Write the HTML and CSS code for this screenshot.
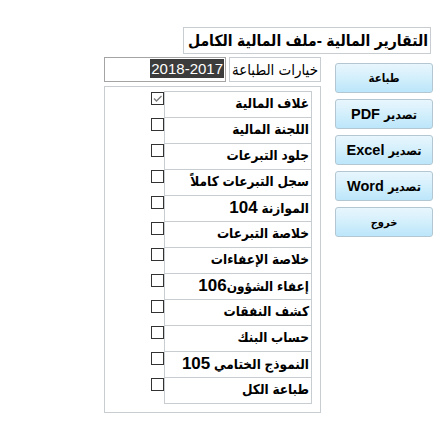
FILE: index.html
```html
<!DOCTYPE html>
<html lang="ar" dir="rtl">

<head>
    <meta charset="UTF-8">
    <title>التقارير المالية</title>
    <link rel="stylesheet" href="styles.css">
</head>

<body>
    <div id="win">
        <div id="title">التقارير المالية -ملف المالية الكامل</div>
        <div id="main">
            <div id="btns">
                <button class="btn print">طباعة</button>
                <button class="btn"><span class="ar">تصدير</span> PDF</button>
                <button class="btn"><span class="ar">تصدير</span> Excel</button>
                <button class="btn"><span class="ar">تصدير</span> Word</button>
                <button class="btn quit">خروج</button>
            </div>
            <div id="opts">
                <div id="opts_top">
                    <div id="opts_cap">خيارات الطباعة</div>
                    <div id="year"><span>2018-2017</span></div>
                </div>
                <div id="list">
                    <div class="row"><span class="lbl">غلاف المالية</span><span class="chk"><svg width="11" height="11" viewBox="0 0 11 11"><path d="M2 5.5 L4.5 8 L9.5 3" fill="none" stroke="#7a7a7a" stroke-width="1.3"/></svg></span></div>
                    <div class="row"><span class="lbl">اللجنة المالية</span><span class="chk"></span></div>
                    <div class="row"><span class="lbl">جلود التبرعات</span><span class="chk"></span></div>
                    <div class="row"><span class="lbl">سجل التبرعات كاملاً</span><span class="chk"></span></div>
                    <div class="row"><span class="lbl">الموازنة <b class="num">104</b></span><span class="chk"></span></div>
                    <div class="row"><span class="lbl">خلاصة التبرعات</span><span class="chk"></span></div>
                    <div class="row"><span class="lbl">خلاصة الإعفاءات</span><span class="chk"></span></div>
                    <div class="row"><span class="lbl">إعفاء الشؤون<b class="num">106</b></span><span class="chk"></span></div>
                    <div class="row"><span class="lbl">كشف النفقات</span><span class="chk"></span></div>
                    <div class="row"><span class="lbl">حساب البنك</span><span class="chk"></span></div>
                    <div class="row"><span class="lbl">النموذج الختامي <b class="num">105</b></span><span class="chk"></span></div>
                    <div class="row"><span class="lbl">طباعة الكل</span><span class="chk"></span></div>
                </div>
            </div>
        </div>
    </div>
</body>

</html>
```

FILE: styles.css
```css
* {
    margin: 0;
    padding: 0;
    box-sizing: border-box;
}

body {
    background: #fff;
    color: #000;
    font-family: "Liberation Sans", "DejaVu Sans Condensed", "DejaVu Sans", sans-serif;
}

#win {
    padding: 27px 5px 0 0;
}

#title {
    width: 248px;
    height: 27px;
    margin-right: 2px;
    border: 1px solid #c8cdd1;
    padding-right: 2px;
    font-size: 15.6px;
    font-weight: 700;
    line-height: 25px;
    white-space: nowrap;
    overflow: hidden;
}

#main {
    display: flex;
    align-items: flex-start;
    gap: 14px;
    margin-top: 3px;
}

/* buttons column */
#btns {
    width: 98px;
    flex-shrink: 0;
    margin-top: 6px;
    display: flex;
    flex-direction: column;
    gap: 6px;
}

.btn {
    height: 30px;
    border: 1px solid #b3c7d3;
    border-radius: 3px;
    background: linear-gradient(to bottom, #e8f6fd 0%, #d5f0fc 45%, #bce6fa 100%);
    font-family: inherit;
    font-size: 14.5px;
    font-weight: 700;
    color: #000;
}

.btn .ar {
    font-size: 12.5px;
}

.btn.print {
    font-size: 11.5px;
}

.btn.quit {
    font-size: 11px;
}

/* options */
#opts {
    width: 217px;
    flex-shrink: 0;
}

#opts_top {
    display: flex;
    gap: 3px;
    height: 25px;
}

#opts_cap {
    width: 92px;
    border: 1px solid #c8cdd1;
    padding-right: 2px;
    font-size: 15px;
    line-height: 23px;
    white-space: nowrap;
    overflow: hidden;
}

#year {
    width: 122px;
    border: 1px solid #a4a4a4;
    padding: 1px 1px 0;
    display: flex;
    align-items: flex-start;
}

#year span {
    background: #3c3c3c;
    color: #fff;
    font-size: 15px;
    line-height: 19px;
    padding: 0 1px;
}

#list {
    margin-top: 4px;
    height: 327px;
    border: 1px solid #c8cdd1;
    padding: 4px 8px 0 0;
}

.row {
    display: flex;
    align-items: flex-start;
}

.lbl {
    width: 148px;
    height: 26px;
    flex-shrink: 0;
    border: 1px solid #c8cdd1;
    border-top: none;
    padding-right: 2px;
    font-size: 13.5px;
    font-weight: 700;
    line-height: 24px;
    white-space: nowrap;
    overflow: hidden;
}

.lbl .num {
    font-size: 17px;
}

.row:first-child .lbl {
    height: 27px;
    border-top: 1px solid #c8cdd1;
}

.chk {
    width: 13px;
    height: 13px;
    flex-shrink: 0;
    border: 1px solid #333;
    background: #fff;
    display: flex;
    align-items: center;
    justify-content: center;
}

.row:first-child .chk {
    margin-top: 1px;
}
```
